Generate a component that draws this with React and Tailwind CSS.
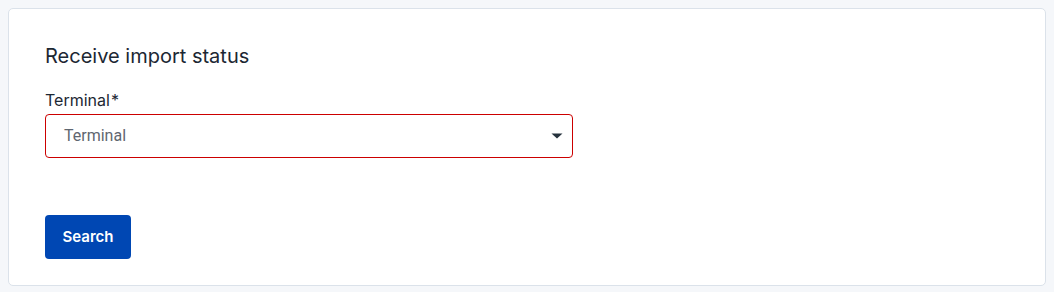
export default function App() {
  return (
    <div className="min-h-[292px] bg-[#f5f7fa] p-2" style={{ fontFamily: "Inter, 'Noto Sans', sans-serif" }}>
      <div className="h-[278px] rounded-[5px] border border-[#dbe2ea] bg-white pl-9 pr-9 pt-[33px]">
        <h2 className="text-[20px] leading-[28px] font-normal text-[#1c2733]">Receive import status</h2>
        <div className="mt-[21px] w-[528px]">
          <label className="block text-[16px] leading-[18px] font-normal text-[#1c2733]">
            Terminal<span className="ml-[1px]">*</span>
          </label>
          <div className="mt-[5px] flex h-[44px] items-center justify-between rounded-[4px] border border-[#cc0000] pl-[18px] pr-[10px]">
            <span className="text-[16px] text-[#5f6670]" style={{ fontFamily: "Roboto, sans-serif" }}>Terminal</span>
            <svg width="12" height="6" viewBox="0 0 12 6" className="-mr-[1px]">
              <path d="M0.5 0.5 H11.5 L6 5.5 Z" fill="#26323d" />
            </svg>
          </div>
        </div>
        <button className="mt-[57px] flex h-[44px] w-[86px] items-center justify-center rounded-[4px] bg-[#0047b3] text-[15px] font-semibold text-white">
          Search
        </button>
      </div>
    </div>
  );
}
